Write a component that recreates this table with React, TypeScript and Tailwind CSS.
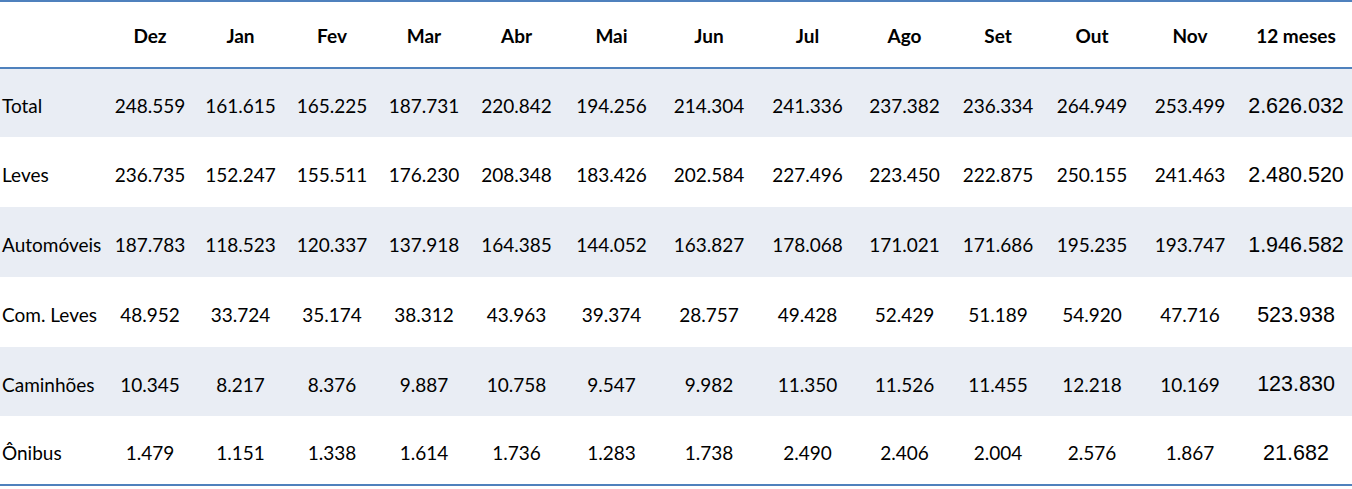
const months = ['Dez', 'Jan', 'Fev', 'Mar', 'Abr', 'Mai', 'Jun', 'Jul', 'Ago', 'Set', 'Out', 'Nov'];

const rows: { label: string; values: string[]; total: string; h: string }[] = [
  { label: 'Total', values: ['248.559', '161.615', '165.225', '187.731', '220.842', '194.256', '214.304', '241.336', '237.382', '236.334', '264.949', '253.499'], total: '2.626.032', h: 'h-[68px]' },
  { label: 'Leves', values: ['236.735', '152.247', '155.511', '176.230', '208.348', '183.426', '202.584', '227.496', '223.450', '222.875', '250.155', '241.463'], total: '2.480.520', h: 'h-[70px]' },
  { label: 'Automóveis', values: ['187.783', '118.523', '120.337', '137.918', '164.385', '144.052', '163.827', '178.068', '171.021', '171.686', '195.235', '193.747'], total: '1.946.582', h: 'h-[70px]' },
  { label: 'Com. Leves', values: ['48.952', '33.724', '35.174', '38.312', '43.963', '39.374', '28.757', '49.428', '52.429', '51.189', '54.920', '47.716'], total: '523.938', h: 'h-[70px]' },
  { label: 'Caminhões', values: ['10.345', '8.217', '8.376', '9.887', '10.758', '9.547', '9.982', '11.350', '11.526', '11.455', '12.218', '10.169'], total: '123.830', h: 'h-[69px]' },
  { label: 'Ônibus', values: ['1.479', '1.151', '1.338', '1.614', '1.736', '1.283', '1.738', '2.490', '2.406', '2.004', '2.576', '1.867'], total: '21.682', h: 'h-[68px]' },
];

const cols = 'grid grid-cols-[105px_90px_91px_92px_92px_93px_97px_98px_99px_95px_92px_96px_100px_112px]';

export default function App() {
  return (
    <div className="w-[1352px] h-[489px] bg-white text-black font-['Lato',sans-serif]">
      <div className="border-t-2 border-b-2 border-[#4f81bd]">
        {/* header */}
        <div className={`${cols} h-[67px] items-center pt-[4px] border-b-2 border-[#4f81bd] text-[19px] font-bold`}>
          <div />
          {months.map((m) => (
            <div key={m} className="text-center">{m}</div>
          ))}
          <div className="text-center">12 meses</div>
        </div>

        {rows.map((r, i) => (
          <div key={r.label} className={`${cols} ${r.h} items-center pt-[7px] text-[19px] ${i % 2 === 0 ? 'bg-[#e9edf4]' : 'bg-white'}`}>
            <div className="pl-[2px] whitespace-nowrap">{r.label}</div>
            {r.values.map((v, j) => (
              <div key={j} className="text-center">{v}</div>
            ))}
            <div className="text-center font-['Liberation_Sans',sans-serif] text-[21.5px] -mt-[1px]">{r.total}</div>
          </div>
        ))}
      </div>
    </div>
  );
}
